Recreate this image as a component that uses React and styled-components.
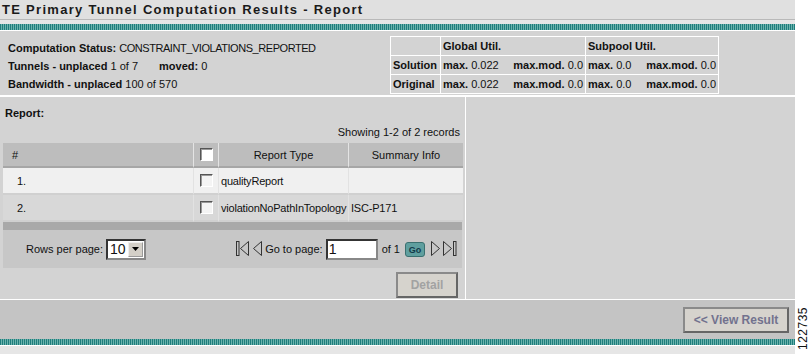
import styled, { createGlobalStyle } from "styled-components";

const GlobalStyle = createGlobalStyle`
  html, body {
    margin: 0;
    padding: 0;
    background: #ffffff;
  }
  body {
    font-family: "Liberation Sans", Arial, sans-serif;
    font-size: 11px;
    color: #111;
  }
`;

const rows = [
  { num: "1.", type: "qualityReport", info: "", light: true },
  { num: "2.", type: "violationNoPathInTopology", info: "ISC-P171", light: false },
];

function App() {
  return (
    <>
      <GlobalStyle />
      <Page>
        <Main>
          <TitleBar>TE Primary Tunnel Computation Results - Report</TitleBar>
          <TitleGap />
          <Stripe />
          <Summary>
            <StatusBlock>
              <Line>
                <b>Computation Status:</b> <Caps>CONSTRAINT_VIOLATIONS_REPORTED</Caps>
              </Line>
              <Line>
                <b>Tunnels - unplaced</b> 1 of 7 <Spacer />
                <b>moved:</b> 0
              </Line>
              <Line>
                <b>Bandwidth - unplaced</b> 100 of 570
              </Line>
            </StatusBlock>
            <UtilTable>
              <colgroup>
                <col style={{ width: 50 }} />
                <col style={{ width: 145 }} />
                <col style={{ width: 133 }} />
              </colgroup>
              <tbody>
                <tr>
                  <UtilCell></UtilCell>
                  <UtilCell>
                    <b>Global Util.</b>
                  </UtilCell>
                  <UtilCell>
                    <b>Subpool Util.</b>
                  </UtilCell>
                </tr>
                {[
                  ["Solution", "0.022", "0.0", "0.0", "0.0"],
                  ["Original", "0.022", "0.0", "0.0", "0.0"],
                ].map((r) => (
                  <tr key={r[0]}>
                    <UtilCell>
                      <b>{r[0]}</b>
                    </UtilCell>
                    <UtilCell>
                      <Pair>
                        <span>
                          <b>max.</b> {r[1]}
                        </span>
                        <span>
                          <b>max.mod.</b> {r[2]}
                        </span>
                      </Pair>
                    </UtilCell>
                    <UtilCell>
                      <Pair>
                        <span>
                          <b>max.</b> {r[3]}
                        </span>
                        <span>
                          <b>max.mod.</b> {r[4]}
                        </span>
                      </Pair>
                    </UtilCell>
                  </tr>
                ))}
              </tbody>
            </UtilTable>
          </Summary>
          <ReportArea>
            <ReportPanel>
              <ReportLabel>Report:</ReportLabel>
              <Showing>Showing 1-2 of 2 records</Showing>
              <Grid>
                <HeadCell $align="left" $pl={9}>#</HeadCell>
                <HeadCell $align="center">
                  <Check $white />
                </HeadCell>
                <HeadCell $align="center">Report Type</HeadCell>
                <HeadCell $align="center">Summary Info</HeadCell>
                {rows.map((r) => (
                  <Row key={r.num} $light={r.light}>
                    <BodyCell $pl={14}>{r.num}</BodyCell>
                    <BodyCell $center>
                      <Check />
                    </BodyCell>
                    <BodyCell $pl={2}>{r.type}</BodyCell>
                    <BodyCell $pl={2}>{r.info}</BodyCell>
                  </Row>
                ))}
              </Grid>
              <DarkBar />
              <Pager>
                <RowsPer>
                  Rows per page:
                  <Select>
                    <span>10</span>
                    <SelectArrow>
                      <svg width="7" height="4" viewBox="0 0 7 4">
                        <path d="M0 0h7L3.5 4z" fill="#000" />
                      </svg>
                    </SelectArrow>
                  </Select>
                </RowsPer>
                <Nav>
                  <NavIcon kind="first" />
                  <NavIcon kind="prev" />
                  <span>Go to page:</span>
                  <PageInput>1</PageInput>
                  <span>of 1</span>
                  <GoButton>Go</GoButton>
                  <NavIcon kind="next" />
                  <NavIcon kind="last" />
                </Nav>
              </Pager>
              <ButtonRow>
                <GrayButton $w={62}>Detail</GrayButton>
              </ButtonRow>
            </ReportPanel>
            <SidePanel />
          </ReportArea>
          <BottomBar>
            <GrayButton $w={106} $dark>
              &lt;&lt; View Result
            </GrayButton>
          </BottomBar>
          <Stripe />
          <Footer />
        </Main>
        <SideNote>
          <span>122735</span>
        </SideNote>
      </Page>
    </>
  );
}

// hollow triangles with an optional end bar, like the old pager arrows
function NavIcon({ kind }) {
  const left = kind === "first" || kind === "prev";
  const w = kind === "first" || kind === "last" ? 14 : 9;
  const tx = kind === "first" ? 4.5 : 0.5;
  const tri = left
    ? `M${tx + 8} 0.5L${tx} 7.5L${tx + 8} 14.5z`
    : `M${tx} 0.5L${tx + 8} 7.5L${tx} 14.5z`;
  return (
    <svg width={w} height="16" viewBox={`0 0 ${w} 16`}>
      {kind === "first" && (
        <rect x="0.5" y="0.5" width="2.5" height="14" fill="none" stroke="#333" strokeWidth="1" />
      )}
      <path d={tri} fill="none" stroke="#333" strokeWidth="1" />
      {kind === "last" && (
        <rect x="10.5" y="0.5" width="2.5" height="14" fill="none" stroke="#333" strokeWidth="1" />
      )}
    </svg>
  );
}

const Page = styled.div`
  display: flex;
  width: 811px;
  height: 354px;
  overflow: hidden;
`;

const Main = styled.div`
  width: 795px;
  display: flex;
  flex-direction: column;
  background: #e6e6e6;
`;

const TitleBar = styled.div`
  height: 20px;
  line-height: 19px;
  padding-left: 2px;
  background: #e0e0e0;
  border-bottom: 1px solid #b9b9b9;
  font-size: 13px;
  font-weight: bold;
  letter-spacing: 1.3px;
  color: #1a1a1a;
  box-sizing: border-box;
`;

const TitleGap = styled.div`
  height: 4px;
  background: #e6e6e6;
`;

const Stripe = styled.div`
  height: 6px;
  border-bottom: 1px solid #ffffff;
  background: repeating-linear-gradient(
    90deg,
    #1f7d7d 0px,
    #1f7d7d 1px,
    #6cb3ac 1px,
    #6cb3ac 2px
  );
`;

const Summary = styled.div`
  height: 64px;
  background: #d3d3d3;
  display: flex;
  border-bottom: 2px solid #ffffff;
`;

const StatusBlock = styled.div`
  width: 390px;
  padding: 8px 0 0 8px;
  box-sizing: border-box;
`;

const Caps = styled.span`
  letter-spacing: -0.45px;
`;

const Line = styled.div`
  height: 18px;
  line-height: 18px;
  white-space: nowrap;
`;

const Spacer = styled.span`
  display: inline-block;
  width: 18px;
`;

const UtilTable = styled.table`
  margin-top: 5px;
  border-collapse: collapse;
  table-layout: fixed;
  width: 328px;
  align-self: flex-start;
`;

const UtilCell = styled.td`
  border: 1px solid #ffffff;
  height: 18px;
  padding: 0 2px;
  white-space: nowrap;
  overflow: hidden;
`;

const Pair = styled.div`
  display: flex;
  justify-content: space-between;
  gap: 10px;
`;

const ReportArea = styled.div`
  display: flex;
  height: 202px;
  border-bottom: 1px solid #ffffff;
`;

const ReportPanel = styled.div`
  width: 466px;
  background: #d3d3d3;
  border-right: 1px solid #ffffff;
  padding: 9px 3px 0 3px;
  box-sizing: border-box;
  display: flex;
  flex-direction: column;
`;

const SidePanel = styled.div`
  flex: 1;
  background: #d3d3d3;
`;

const ReportLabel = styled.div`
  font-weight: bold;
  height: 14px;
  line-height: 14px;
  padding-left: 2px;
`;

const Showing = styled.div`
  text-align: right;
  height: 23px;
  line-height: 24px;
  padding-right: 2px;
`;

const Grid = styled.div`
  display: grid;
  grid-template-columns: 190px 25px 130px 115px;
`;

const HeadCell = styled.div`
  height: 23px;
  background: #bdbdbd;
  border-left: 1px solid #e4e4e4;
  border-bottom: 2px solid #a6a6a6;
  display: flex;
  align-items: center;
  justify-content: ${(p) => (p.$align === "left" ? "flex-start" : "center")};
  padding-left: ${(p) => p.$pl || 0}px;
  &:first-child {
    border-left: none;
  }
`;

const Row = styled.div`
  display: contents;
  & > div {
    background: ${(p) => (p.$light ? "#f0f0f0" : "#d8d8d8")};
    border-bottom: 2px solid #d0d0d0;
  }
`;

const BodyCell = styled.div`
  height: 25px;
  display: flex;
  align-items: center;
  justify-content: ${(p) => (p.$center ? "center" : "flex-start")};
  padding-left: ${(p) => p.$pl || 0}px;
  border-left: 1px solid #e2e2e2;
  white-space: nowrap;
  letter-spacing: -0.2px;
  &:first-child {
    border-left: none;
  }
`;

const Check = styled.span`
  display: inline-block;
  width: 11px;
  height: 11px;
  background: ${(p) => (p.$white ? "#ffffff" : "#f4f4f4")};
  border-top: 1px solid #555;
  border-left: 1px solid #555;
  border-bottom: 1px solid #fff;
  border-right: 1px solid #fff;
  box-shadow: inset 1px 1px 0 #999;
`;

const DarkBar = styled.div`
  height: 8px;
  background: #a9a9a9;
`;

const Pager = styled.div`
  height: 38px;
  background: #c7c7c7;
  display: flex;
  align-items: center;
  justify-content: space-between;
  padding: 0 5px 0 23px;
`;

const RowsPer = styled.div`
  display: flex;
  align-items: center;
  gap: 3px;
`;

const Select = styled.div`
  width: 40px;
  height: 21px;
  box-sizing: border-box;
  background: #ffffff;
  border: 2px inset #888;
  display: flex;
  align-items: center;
  justify-content: space-between;
  font-size: 14px;
  padding-left: 2px;
`;

const SelectArrow = styled.span`
  width: 15px;
  height: 15px;
  margin-right: 1px;
  background: #d4d0c8;
  border: 1px outset #eee;
  box-sizing: border-box;
  display: flex;
  align-items: center;
  justify-content: center;
`;

const Nav = styled.div`
  display: flex;
  align-items: center;
  gap: 3px;
`;

const PageInput = styled.div`
  width: 52px;
  height: 21px;
  box-sizing: border-box;
  background: #ffffff;
  border: 2px inset #888;
  font-size: 14px;
  line-height: 17px;
  padding-left: 1px;
  margin-right: 1px;
`;

const GoButton = styled.span`
  display: inline-block;
  width: 20px;
  height: 15px;
  line-height: 14px;
  text-align: center;
  border-radius: 3px;
  background: #5f9f9f;
  border: 1px solid #3a7070;
  box-sizing: border-box;
  color: #123a4a;
  font-size: 9px;
  font-weight: bold;
  margin: 0 3px 0 2px;
`;

const ButtonRow = styled.div`
  display: flex;
  justify-content: flex-end;
  padding: 4px 4px 0 0;
`;

const GrayButton = styled.div`
  width: ${(p) => p.$w}px;
  height: 26px;
  box-sizing: border-box;
  background: #d6d3cd;
  border: 2px solid #8a8a8a;
  border-color: #8a8a8a #666 #666 #8a8a8a;
  display: flex;
  align-items: center;
  justify-content: center;
  font-family: "Liberation Sans", Arial, sans-serif;
  font-size: 12px;
  font-weight: bold;
  color: ${(p) => (p.$dark ? "#72728e" : "#a2a2a2")};
`;

const BottomBar = styled.div`
  height: 39px;
  background: #c4c4c4;
  display: flex;
  align-items: center;
  justify-content: flex-end;
  padding-right: 6px;
`;

const Footer = styled.div`
  flex: 1;
  background: #e6e6e6;
`;

const SideNote = styled.div`
  width: 16px;
  display: flex;
  align-items: flex-end;
  justify-content: center;
  padding-bottom: 4px;
  span {
    writing-mode: vertical-rl;
    transform: rotate(180deg);
    font-size: 12px;
    letter-spacing: 0.5px;
    color: #111;
  }
`;

export default App;
